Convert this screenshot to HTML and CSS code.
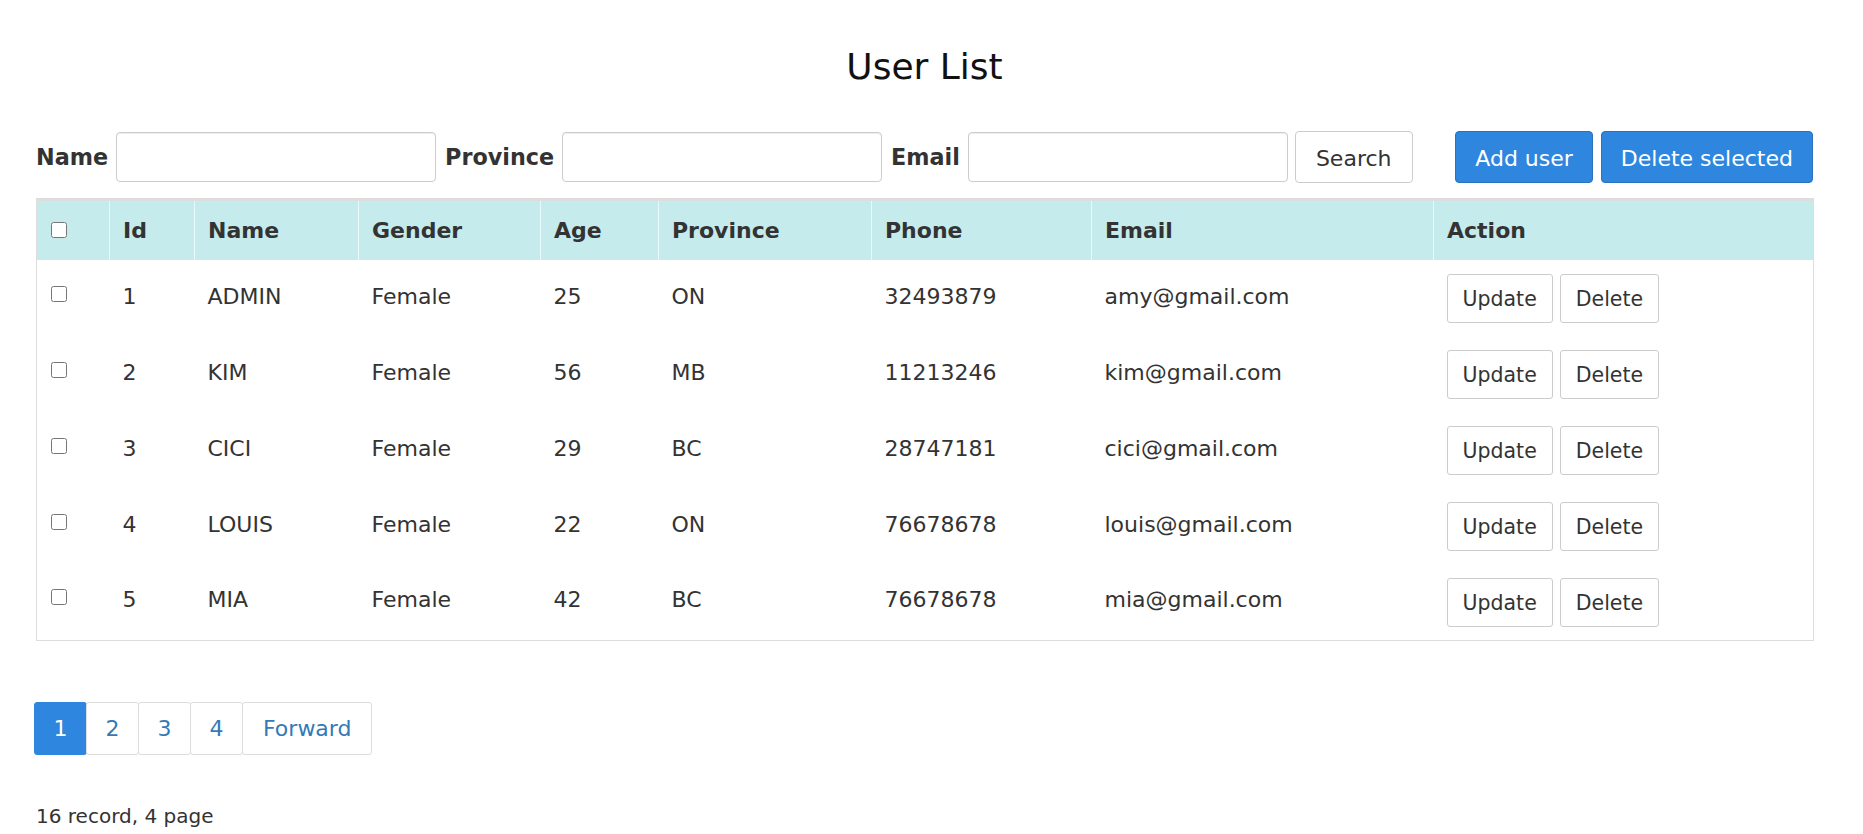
FILE: index.html
```html
<!DOCTYPE html>
<html>
<head>
<meta charset="utf-8">
<title>User List</title>
<link rel="stylesheet" href="styles.css">
</head>
<body>
<div class="container">
  <h1 class="title">User List</h1>
  <form class="search-row">
    <label class="lbl">Name</label>
    <input class="field" type="text">
    <label class="lbl">Province</label>
    <input class="field" type="text">
    <label class="lbl">Email</label>
    <input class="field" type="text">
    <button type="button" class="btn btn-default">Search</button>
    <div class="actions">
      <button type="button" class="btn btn-primary">Add user</button>
      <button type="button" class="btn btn-primary">Delete selected</button>
    </div>
  </form>

  <table class="users">
    <colgroup>
      <col class="c-check"><col class="c-id"><col class="c-name"><col class="c-gender"><col class="c-age"><col class="c-prov"><col class="c-phone"><col class="c-email"><col class="c-action">
    </colgroup>
    <thead>
      <tr>
        <th><input type="checkbox" class="chk"></th>
        <th>Id</th><th>Name</th><th>Gender</th><th>Age</th><th>Province</th><th>Phone</th><th>Email</th><th>Action</th>
      </tr>
    </thead>
    <tbody>
      <tr><td><input type="checkbox" class="chk"></td><td>1</td><td>ADMIN</td><td>Female</td><td>25</td><td>ON</td><td>32493879</td><td>amy@gmail.com</td><td class="act"><button class="btn-sm">Update</button><button class="btn-sm">Delete</button></td></tr>
      <tr><td><input type="checkbox" class="chk"></td><td>2</td><td>KIM</td><td>Female</td><td>56</td><td>MB</td><td>11213246</td><td>kim@gmail.com</td><td class="act"><button class="btn-sm">Update</button><button class="btn-sm">Delete</button></td></tr>
      <tr><td><input type="checkbox" class="chk"></td><td>3</td><td>CICI</td><td>Female</td><td>29</td><td>BC</td><td>28747181</td><td>cici@gmail.com</td><td class="act"><button class="btn-sm">Update</button><button class="btn-sm">Delete</button></td></tr>
      <tr><td><input type="checkbox" class="chk"></td><td>4</td><td>LOUIS</td><td>Female</td><td>22</td><td>ON</td><td>76678678</td><td>louis@gmail.com</td><td class="act"><button class="btn-sm">Update</button><button class="btn-sm">Delete</button></td></tr>
      <tr><td><input type="checkbox" class="chk"></td><td>5</td><td>MIA</td><td>Female</td><td>42</td><td>BC</td><td>76678678</td><td>mia@gmail.com</td><td class="act"><button class="btn-sm">Update</button><button class="btn-sm">Delete</button></td></tr>
    </tbody>
  </table>

  <ul class="pagination">
    <li class="active"><a>1</a></li>
    <li><a>2</a></li>
    <li><a>3</a></li>
    <li><a>4</a></li>
    <li class="wide"><a>Forward</a></li>
  </ul>

  <p class="summary">16 record, 4 page</p>
</div>
</body>
</html>
```

FILE: styles.css
```css
* { box-sizing: border-box; }

html, body {
  margin: 0;
  padding: 0;
  background: #fff;
}

body {
  font-family: "DejaVu Sans", Verdana, sans-serif;
  color: #333;
  font-size: 22px;
}

.container {
  padding: 0 50px 0 36px;
}

.title {
  margin: 47px 0 0;
  font-size: 36px;
  line-height: 40px;
  font-weight: normal;
  color: #111;
  text-align: center;
}

.search-row {
  display: flex;
  align-items: center;
  margin-top: 44px;
  height: 52px;
}

.lbl {
  font-weight: bold;
  font-size: 22.3px;
  margin-right: 8px;
  color: #333;
}

.field {
  width: 320px;
  height: 50px;
  border: 1px solid #ccc;
  border-radius: 4px;
  margin: 0 9px 0 0;
  padding: 0 12px;
  font: inherit;
  box-shadow: inset 0 1px 1px rgba(0,0,0,0.075);
}

.field + .btn { margin-left: -2px; }

.btn {
  font-family: inherit;
  font-size: 22px;
  line-height: 30px;
  padding: 12px 20px 8px;
  border-radius: 4px;
  border: 1px solid #ccc;
  background: #fff;
  color: #333;
  margin: 0;
}

.btn-primary {
  background: #2e86de;
  border-color: #2a72bd;
  color: #fff;
}

.actions {
  margin-left: auto;
  display: flex;
  gap: 8px;
}

.actions .btn { padding-left: 19px; padding-right: 19px; }

.users {
  width: 100%;
  margin-top: 15px;
  border-collapse: collapse;
  table-layout: fixed;
  border: 1px solid #ddd;
  border-top: 3px solid #ddd;
}

.c-check { width: 73px; }
.c-id { width: 85px; }
.c-name { width: 164px; }
.c-gender { width: 182px; }
.c-age { width: 118px; }
.c-prov { width: 213px; }
.c-phone { width: 220px; }
.c-email { width: 342px; }
.c-action { width: 380px; }

.users th {
  background: #c5ebed;
  text-align: left;
  font-weight: bold;
  font-size: 22px;
  line-height: 31px;
  padding: 14px 13px;
  border-left: 1px solid #eaf8f9;
  color: #333;
}

.users th:first-child { border-left: none; }

.users th .chk { position: relative; top: -2px; }

.users td {
  height: 76px;
  padding: 0 13px 4px;
  font-size: 22px;
  line-height: 31px;
  vertical-align: middle;
  color: #333;
}

.users td.act { padding: 1px 13px 0; }

.chk {
  width: 16px;
  height: 16px;
  margin: 0 0 0 1px;
  vertical-align: middle;
}

.users td:first-child .chk { position: relative; top: -4px; }

.btn-sm {
  font-family: inherit;
  font-size: 20.5px;
  line-height: 29px;
  padding: 10px 15px 8px;
  border: 1px solid #ccc;
  border-radius: 3px;
  background: #fff;
  color: #333;
  margin: 0 7px 0 0;
}

.pagination {
  list-style: none;
  display: flex;
  margin: 61px 0 0 -2px;
  padding: 0;
}

.pagination li a {
  display: block;
  font-size: 22px;
  line-height: 31px;
  padding: 10px 18.5px;
  border: 1px solid #ddd;
  color: #337ab7;
  background: #fff;
  margin-left: -1px;
  border-radius: 3px;
}

.pagination li.wide a { padding: 10px 20px; }

.pagination li:first-child a { margin-left: 0; }

.pagination li.active a {
  background: #2e86de;
  border-color: #2e86de;
  color: #fff;
}

.summary {
  margin: 47px 0 0;
  font-size: 20px;
  line-height: 28px;
  color: #333;
}
```
